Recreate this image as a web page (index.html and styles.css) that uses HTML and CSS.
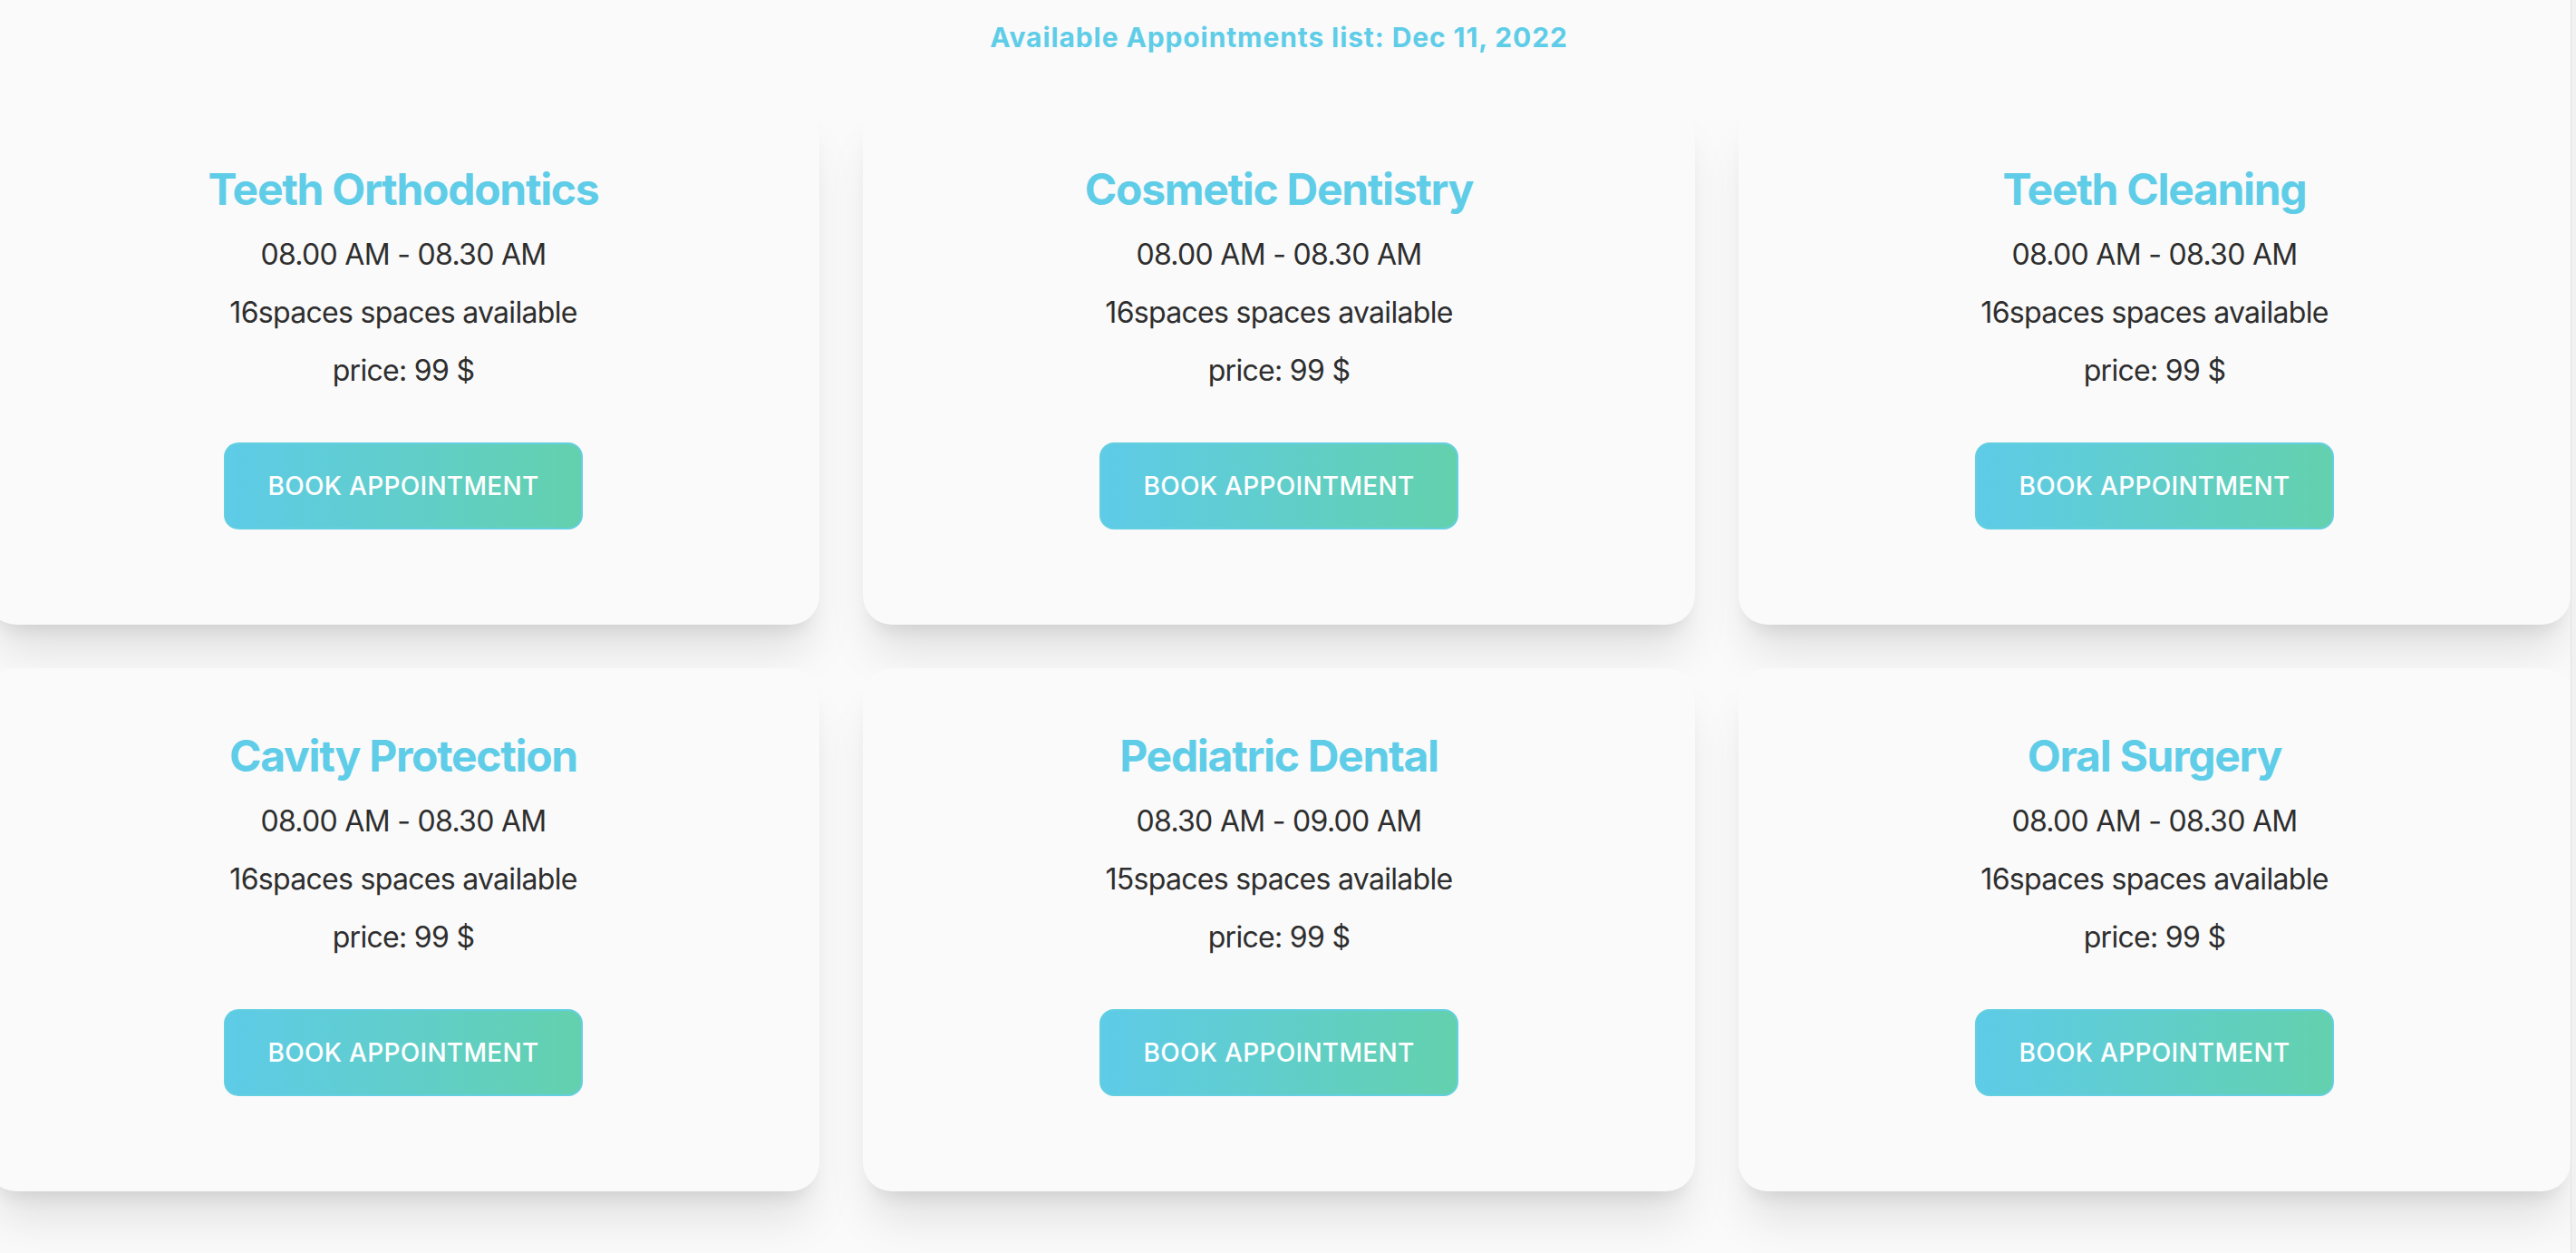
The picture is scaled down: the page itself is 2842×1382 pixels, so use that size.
FILE: index.html
```html
<!DOCTYPE html>
<html lang="en">
<head>
<meta charset="utf-8">
<title>Available Appointments</title>
<link rel="stylesheet" href="styles.css">
</head>
<body>
<div class="page">
  <main class="content">
    <h2 class="heading">Available Appointments list: Dec 11, 2022</h2>
    <div class="grid">
      <div class="card">
        <h3 class="card-title">Teeth Orthodontics</h3>
        <p class="line">08.00 AM - 08.30 AM</p>
        <p class="line">16spaces spaces available</p>
        <p class="line">price: 99 $</p>
        <button class="btn">BOOK APPOINTMENT</button>
      </div>
      <div class="card">
        <h3 class="card-title">Cosmetic Dentistry</h3>
        <p class="line">08.00 AM - 08.30 AM</p>
        <p class="line">16spaces spaces available</p>
        <p class="line">price: 99 $</p>
        <button class="btn">BOOK APPOINTMENT</button>
      </div>
      <div class="card">
        <h3 class="card-title">Teeth Cleaning</h3>
        <p class="line">08.00 AM - 08.30 AM</p>
        <p class="line">16spaces spaces available</p>
        <p class="line">price: 99 $</p>
        <button class="btn">BOOK APPOINTMENT</button>
      </div>
      <div class="card">
        <h3 class="card-title">Cavity Protection</h3>
        <p class="line">08.00 AM - 08.30 AM</p>
        <p class="line">16spaces spaces available</p>
        <p class="line">price: 99 $</p>
        <button class="btn">BOOK APPOINTMENT</button>
      </div>
      <div class="card">
        <h3 class="card-title">Pediatric Dental</h3>
        <p class="line">08.30 AM - 09.00 AM</p>
        <p class="line">15spaces spaces available</p>
        <p class="line">price: 99 $</p>
        <button class="btn">BOOK APPOINTMENT</button>
      </div>
      <div class="card">
        <h3 class="card-title">Oral Surgery</h3>
        <p class="line">08.00 AM - 08.30 AM</p>
        <p class="line">16spaces spaces available</p>
        <p class="line">price: 99 $</p>
        <button class="btn">BOOK APPOINTMENT</button>
      </div>
    </div>
  </main>
  <div class="scrollbar"></div>
</div>
</body>
</html>
```

FILE: styles.css
```css
html, body {
  margin: 0;
  padding: 0;
  background: #fafafa;
  overflow: hidden;
}

body {
  font-family: Inter, "Noto Sans", sans-serif;
  color: #2b2b2b;
}

.page {
  display: flex;
  width: 2842px;
  height: 1382px;
}

.content {
  flex: 1;
  min-width: 0;
}

.scrollbar {
  width: 5px;
  flex: none;
  background: #f1f1f1;
  border-left: 1px solid #e2e2e2;
}

.heading {
  margin: 21px 0 0 -14px;
  width: 2850px;
  text-align: center;
  font-size: 30px;
  line-height: 40px;
  font-weight: 700;
  letter-spacing: 0.9px;
  color: #5fcde8;
}

.grid {
  margin: 51px 0 0 -14px;
  width: 2850px;
  display: grid;
  grid-template-columns: repeat(3, 918px);
  column-gap: 48px;
  row-gap: 48px;
}

.card {
  background: #fafafa;
  border-radius: 32px;
  box-shadow: 0 40px 50px -10px rgba(0, 0, 0, 0.1), 0 16px 20px -12px rgba(0, 0, 0, 0.1);
  padding: 65px 64px 105px;
  display: flex;
  flex-direction: column;
  align-items: center;
  gap: 16px;
}

.card-title {
  margin: 0;
  font-size: 48px;
  line-height: 64px;
  font-weight: 700;
  letter-spacing: -1.3px;
  color: #5fcde8;
}

.line {
  margin: 0;
  font-size: 32px;
  line-height: 48px;
  letter-spacing: -0.7px;
  color: #2e2e2e;
}

.btn {
  margin-top: 39px;
  height: 96px;
  padding: 0 46px;
  border: 2px solid #64cfe0;
  border-radius: 16px;
  background: linear-gradient(to right, #5ecbe8, #63d1ad);
  color: #ffffff;
  font-family: Inter, "Noto Sans", sans-serif;
  font-size: 28px;
  font-weight: 500;
  letter-spacing: 0.3px;
}
```
